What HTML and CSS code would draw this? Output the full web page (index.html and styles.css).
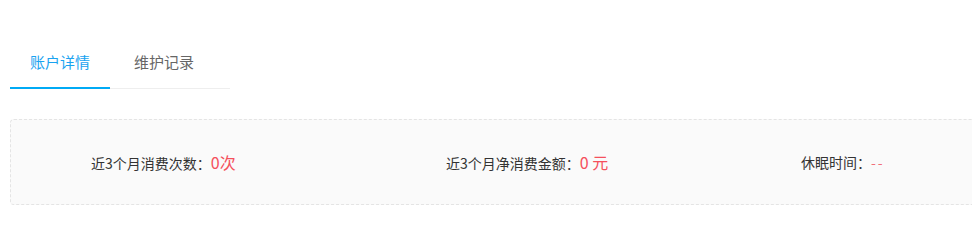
FILE: index.html
```html
<!DOCTYPE html>
<html lang="zh">
<head>
<meta charset="utf-8">
<link rel="stylesheet" href="styles.css">
</head>
<body>
<div class="page">
  <div class="tabs">
    <div class="tab active">账户详情</div>
    <div class="tab">维护记录</div>
  </div>
  <div class="stats">
    <div class="stat"><span class="label">近3个月消费次数：</span><span class="value">0次</span></div>
    <div class="stat"><span class="label">近3个月净消费金额：</span><span class="value">0 元</span></div>
    <div class="stat"><span class="label">休眠时间：</span><span class="value dash">--</span></div>
  </div>
</div>
</body>
</html>
```
FILE: styles.css
```css
html, body {
  margin: 0;
  padding: 0;
  overflow: hidden;
  background: #fff;
}
.page {
  padding: 40px 0 0 10px;
  font-family: "Noto Sans CJK SC", "Noto Sans", sans-serif;
  width: 1200px;
}
.tabs {
  display: flex;
  width: 220px;
  height: 49px;
  border-bottom: 1px solid #eeeeee;
  box-sizing: border-box;
}
.tab {
  font-size: 15px;
  color: #666;
  line-height: 44px;
  height: 48px;
  box-sizing: border-box;
  padding: 0 20px;
  margin-bottom: -1px;
}
.tab + .tab {
  margin-left: 4px;
}
.tab.active {
  color: #1aa3f0;
  border-bottom: 2px solid #00aaf5;
  height: 49px;
  margin-bottom: -1px;
}
.stats {
  margin-top: 30px;
  width: 1065px;
  height: 86px;
  box-sizing: border-box;
  border: 1px dashed #e4e4e4;
  border-radius: 4px;
  background: #fafafa;
  display: grid;
  grid-template-columns: 355px 355px 355px;
  align-items: center;
}
.stat {
  padding-left: 80px;
  font-size: 14px;
  color: #333;
  display: flex;
  align-items: baseline;
}
.value {
  color: #f5505c;
  font-size: 16px;
}
.value.dash {
  color: #f0707a;
  font-size: 14px;
  letter-spacing: 2px;
}
```
